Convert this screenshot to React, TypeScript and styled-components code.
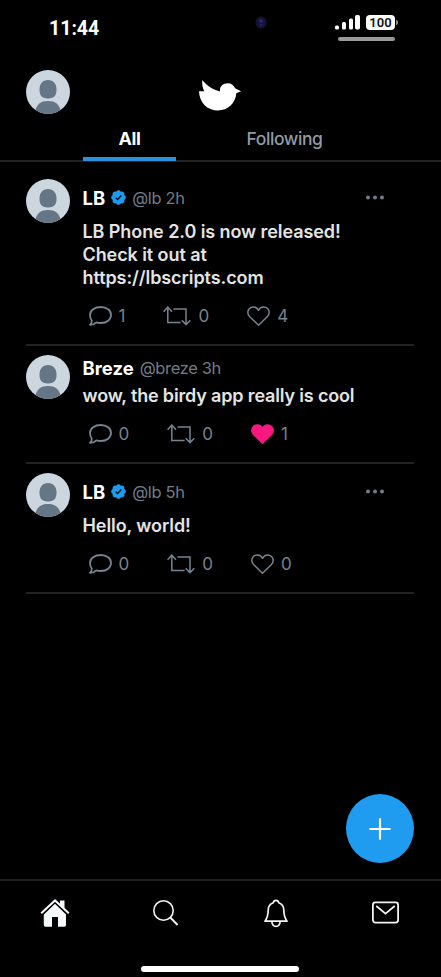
import React from "react";
import styled, { createGlobalStyle } from "styled-components";

const Global = createGlobalStyle`
  * { box-sizing: border-box; }
  body { margin: 0; background: #000; }
  button { background: none; border: 0; padding: 0; margin: 0; font: inherit; color: inherit; }
`;

const Phone = styled.div`
  position: relative;
  display: flex;
  flex-direction: column;
  width: 441px;
  height: 977px;
  overflow: hidden;
  background: #000;
  color: #e4e4e4;
  font-family: Inter, "Liberation Sans", sans-serif;
  font-size: 18px;
`;

const StatusBar = styled.div`
  display: flex;
  justify-content: space-between;
  height: 70px;
  padding: 15px 42px 0 49px;
`;

const Clock = styled.time`
  width: 53px;
  height: 26px;
  line-height: 27px;
  font-family: Roboto, sans-serif;
  font-size: 19.5px;
  font-weight: 700;
  color: #fff;
`;

const Camera = styled.svg`
  margin: 1px 0 0 85px;
`;

const Indicators = styled.div`
  display: flex;
  flex-direction: column;
  width: 64px;
  gap: 7px;
`;

const Signal = styled.div`
  display: flex;
  align-items: center;
  height: 15px;
  gap: 6px;
`;

const Battery = styled.div`
  position: relative;
  width: 29px;
  height: 15px;
  border-radius: 4px;
  background: #fff;
  color: #111;
  text-align: center;
  font: 600 13px/15px Roboto, sans-serif;
  &::after {
    content: "";
    position: absolute;
    right: -3px;
    top: 5px;
    width: 2px;
    height: 5px;
    border-radius: 0 2px 2px 0;
    background: #888;
  }
`;

const Handle = styled.div`
  width: 57px;
  height: 4px;
  margin-left: 3px;
  border-radius: 2px;
  background: #999;
`;

const Header = styled.header`
  display: grid;
  grid-template-columns: 173px 42px;
  height: 44px;
  padding-left: 26px;
`;

const Tabs = styled.nav`
  display: flex;
  height: 48px;
  padding-left: 83px;
  gap: 62px;
  border-bottom: 2px solid #212327;
`;

const Tab = styled.button<{ $active?: boolean }>`
  width: 93px;
  height: 47px;
  padding: 5px 0 0;
  border-bottom: 4px solid ${(p) => (p.$active ? "#2a93dc" : "transparent")};
  color: ${(p) => (p.$active ? "#fff" : "#8f9ba8")};
  font-weight: ${(p) => (p.$active ? 700 : 500)};
  font-size: ${(p) => (p.$active ? 18 : 17.5)}px;
  letter-spacing: -0.4px;
  white-space: nowrap;
`;

const Feed = styled.main`
  flex: 1;
  padding: 8px 27px 0 26px;
`;

const Post = styled.article`
  display: grid;
  grid-template-columns: 44px 1fr;
  column-gap: 12.5px;
  padding: 9px 0 16px;
  border-bottom: 2px solid #212327;
`;

const PostHeader = styled.div<{ $tall: boolean }>`
  display: flex;
  align-items: center;
  height: ${(p) => (p.$tall ? 39 : 27)}px;
  padding: 0 30px 2px 0;
`;

const Name = styled.span`
  color: #fff;
  font-weight: 700;
  font-size: 18.5px;
  margin-right: 6px;
`;

const Meta = styled.span`
  color: #707c88;
  font-size: 16.5px;
  letter-spacing: -0.35px;
`;

const Badge = styled.svg`
  margin-right: 6px;
`;

const More = styled.svg`
  margin-left: auto;
`;

const Body = styled.p<{ $tight?: boolean }>`
  margin: 2px 0 15px;
  line-height: 23px;
  font-weight: 600;
  font-size: 18px;
  letter-spacing: ${(p) => (p.$tight ? -0.16 : -0.08)}px;
  white-space: pre-line;
`;

const Actions = styled.div`
  display: flex;
  height: 24px;
  padding-left: 6px;
  gap: 38px;
  color: #77838e;
`;

const Action = styled.button`
  display: flex;
  align-items: center;
  gap: 7px;
  font-size: 17px;
`;

const Compose = styled.button`
  position: absolute;
  right: 27px;
  bottom: 114px;
  display: grid;
  place-items: center;
  width: 68px;
  height: 69px;
  border-radius: 50%;
  background: #1f9bf0;
`;

const BottomBar = styled.footer`
  display: flex;
  flex-direction: column;
  align-items: center;
  height: 98px;
  border-top: 2px solid #1f2123;
`;

const NavRow = styled.nav`
  display: flex;
  width: 100%;
  height: 85px;
`;

const NavItem = styled.button`
  flex: 1;
  display: flex;
  justify-content: center;
  align-items: flex-start;
  padding-top: 18px;
`;

const HomeIndicator = styled.div`
  width: 158px;
  height: 6px;
  margin-right: 1.5px;
  border-radius: 3px;
  background: #fff;
`;

const Avatar = () => (
  <svg width="44" height="44" viewBox="0 0 44 44">
    <defs>
      <clipPath id="disc"><circle cx="22" cy="22" r="22" /></clipPath>
    </defs>
    <g clipPath="url(#disc)">
      <rect width="44" height="44" fill="#ccd6de" />
      <path d="M22 10c5.400 0 8.500 4 8.500 9.300 0 5.600-1.500 9.200-8.500 9.200s-8.500-3.600-8.500-9.200C13.500 14 16.600 10 22 10Z" fill="#657786" />
      <path d="M9 42C10.500 34 15 31 22 31s11.500 3 13 11v3H9Z" fill="#657786" />
    </g>
  </svg>
);

const BirdMark = styled.svg`
  margin-top: 9.5px;
`;

const Bird = () => (
  <BirdMark width="42" height="31" viewBox="0 0 42 31" fill="#fff">
    <path d="M3.300 0C7 5 13 9.500 21 11.400 20.300 6.500 24 3.200 28.700 3.200c3.600 0 6.300 2 7.400 5L42 11.200 37.300 13.300C36.700 23 29 30.500 19 30.500 8.300 30.500.300 22.500 0 11.200H5.300C3.600 8 2.800 4 3.300 0Z" />
  </BirdMark>
);

const Verified = () => (
  <Badge width="15" height="15" viewBox="1.500 1.500 21 21">
    <path
      fill="#1d9bf0"
      d="M22.250 12c0-1.430-.880-2.670-2.190-3.340.460-1.390.200-2.900-.810-3.910s-2.520-1.270-3.910-.810c-.660-1.310-1.910-2.190-3.340-2.190s-2.670.880-3.330 2.190c-1.400-.460-2.910-.200-3.920.810s-1.260 2.520-.800 3.910c-1.310.670-2.200 1.910-2.200 3.340s.890 2.670 2.200 3.340c-.460 1.390-.210 2.900.800 3.910s2.520 1.260 3.910.810c.670 1.310 1.910 2.190 3.340 2.190s2.680-.880 3.340-2.190c1.390.450 2.900.200 3.910-.810s1.270-2.520.810-3.910c1.310-.670 2.190-1.910 2.190-3.340Z"
    />
    <path d="m8 12.300 2.700 2.600L16 9.200" fill="none" stroke="#06131d" strokeWidth="2" />
  </Badge>
);

const Reply = () => (
  <svg width="23" height="20" viewBox="0 0 23 20" fill="none" stroke="currentColor" strokeWidth="1.800" strokeLinejoin="round">
    <path d="M11.800 1C17.800 1 22 4.500 22 9s-4.200 8-10.200 8c-1.700 0-3.100-.200-4.500-.700C5.700 18 3.600 18.900 1 18.800c1.300-1 1.900-2.300 1.800-4.300C1.500 13 1 11.100 1 9 1 4.500 5.800 1 11.800 1Z" />
  </svg>
);

const Repost = () => (
  <svg width="28" height="20" viewBox="0 0 28 20" fill="none" stroke="currentColor" strokeWidth="1.500">
    <path d="m.600 5.700 4.200-4.500L9 5.700M4.800 1.500v15h12.800M10.500 3H23v15M18.700 14.300l4.300 4.300 4.300-4.300" />
  </svg>
);

const Heart = ({ filled }: { filled?: boolean }) => (
  <svg
    width="23" height="20" viewBox="0 0 23 20"
    fill={filled ? "#f91880" : "none"}
    stroke={filled ? "#f91880" : "currentColor"}
    strokeWidth="1.500" strokeLinejoin="round"
  >
    <path d="M11.500 4.300C9.300-.200 3.800 0 1.700 3.400.300 5.900.800 8.600 2.800 10.700l8.700 8.500 8.700-8.500c2-2.100 2.500-4.800 1.100-7.300C19.200 0 13.700-.200 11.500 4.300Z" />
  </svg>
);

const HomeIcon = () => (
  <svg width="30" height="29" viewBox="0 0 30 29">
    <path d="M15 4.200 26 14.500V26a1.700 1.700 0 0 1-1.700 1.700H18V18h-6v9.700H5.500A1.700 1.700 0 0 1 3.800 26V14.500Z" fill="#f7fafa" />
    <path d="M1 15 15 1.700 29 15" fill="none" stroke="#000" strokeWidth="4.600" />
    <path d="M1.200 14.300 15 1.400l13.800 12.900" fill="none" stroke="#f7fafa" strokeWidth="2" />
    <path d="M20 1.500h4.500v8.500l-4.500-4.200Z" fill="#f7fafa" />
  </svg>
);

const SearchIcon = () => (
  <svg width="25" height="28" viewBox="0 0 25 28" fill="none" stroke="#f3f3f3" strokeWidth="1.600">
    <circle cx="10.500" cy="11.500" r="9.700" />
    <path d="m17.300 18.500 7.300 7.500" strokeWidth="1.900" />
  </svg>
);

const BellIcon = () => (
  <svg width="24" height="29" viewBox="0 0 24 29" fill="none" stroke="#f3f3f3" strokeWidth="1.700" strokeLinejoin="round">
    <path d="M12 1.300c-1.600 0-2.500.900-2.700 2.400C6 4.900 4.200 7.500 4.200 11c0 5.300-.900 8-3.200 11.200h22c-2.300-3.200-3.200-5.900-3.200-11.200 0-3.500-1.800-6.100-5.100-7.300-.200-1.500-1.100-2.400-2.700-2.400ZM7.800 22.200c.300 3.500 2 5.200 4.200 5.200s3.900-1.700 4.200-5.200" />
  </svg>
);

const MailIcon = () => (
  <svg width="27" height="26" viewBox="0 0 27 26" fill="none" stroke="#f3f3f3" strokeWidth="1.800">
    <rect x=".900" y="3.400" width="25.200" height="20.200" rx="2.500" />
    <path d="m4.300 7 9.200 7.700 9.200-7.700" />
  </svg>
);

type Entry = {
  name: string; verified?: boolean; meta: string; body: string;
  replies: number; reposts: number; likes: number; liked?: boolean;
};

const posts: Entry[] = [
  { name: "LB", verified: true, meta: "@lb 2h", body: "LB Phone 2.0 is now released!\nCheck it out at\nhttps://lbscripts.com", replies: 1, reposts: 0, likes: 4 },
  { name: "Breze", meta: "@breze 3h", body: "wow, the birdy app really is cool", replies: 0, reposts: 0, likes: 1, liked: true },
  { name: "LB", verified: true, meta: "@lb 5h", body: "Hello, world!", replies: 0, reposts: 0, likes: 0 },
];

export default function App() {
  return (
    <Phone>
      <Global />
      <StatusBar>
        <Clock>11:44</Clock>
        <Camera width="12" height="13" viewBox="0 0 12 13">
          <ellipse cx="6" cy="6.500" rx="5.500" ry="6" fill="#141337" />
          <circle cx="6" cy="5" r="2" fill="#29296a" />
          <circle cx="6" cy="9" r="1.200" fill="#24245a" />
        </Camera>
        <Indicators>
          <Signal>
            <svg width="25" height="15" viewBox="0 0 25 15" fill="#fff">
              <rect x="0" y="10.500" width="4" height="4" rx="1.500" />
              <rect x="7" y="7" width="4" height="7.500" rx="1.500" />
              <rect x="14" y="3.500" width="4" height="11" rx="1.500" />
              <rect x="20" y="0" width="5" height="14.500" rx="1.700" />
            </svg>
            <Battery>100</Battery>
          </Signal>
          <Handle />
        </Indicators>
      </StatusBar>
      <Header>
        <Avatar />
        <Bird />
      </Header>
      <Tabs>
        <Tab $active>All</Tab>
        <Tab>Following</Tab>
      </Tabs>
      <Feed>
        {posts.map((p, i) => (
          <Post key={i}>
            <Avatar />
            <div>
              <PostHeader $tall={!!p.verified}>
                <Name>{p.name}</Name>
                {p.verified && <Verified />}
                <Meta>{p.meta}</Meta>
                {p.verified && (
                  <More width="18" height="5" viewBox="0 0 18 5" fill="#707c88">
                    <circle cx="2" cy="2.500" r="2" />
                    <circle cx="9" cy="2.500" r="2" />
                    <circle cx="16" cy="2.500" r="2" />
                  </More>
                )}
              </PostHeader>
              <Body $tight={!p.verified}>{p.body}</Body>
              <Actions>
                <Action><Reply />{p.replies}</Action>
                <Action><Repost />{p.reposts}</Action>
                <Action><Heart filled={p.liked} />{p.likes}</Action>
              </Actions>
            </div>
          </Post>
        ))}
      </Feed>
      <BottomBar>
        <NavRow>
          <NavItem><HomeIcon /></NavItem>
          <NavItem><SearchIcon /></NavItem>
          <NavItem><BellIcon /></NavItem>
          <NavItem><MailIcon /></NavItem>
        </NavRow>
        <HomeIndicator />
      </BottomBar>
      <Compose>
        <svg width="22" height="22" viewBox="0 0 22 22" stroke="#fff" strokeWidth="2.200" strokeLinecap="round">
          <path d="M11 1.200v19.600M1.200 11h19.600" />
        </svg>
      </Compose>
    </Phone>
  );
}
